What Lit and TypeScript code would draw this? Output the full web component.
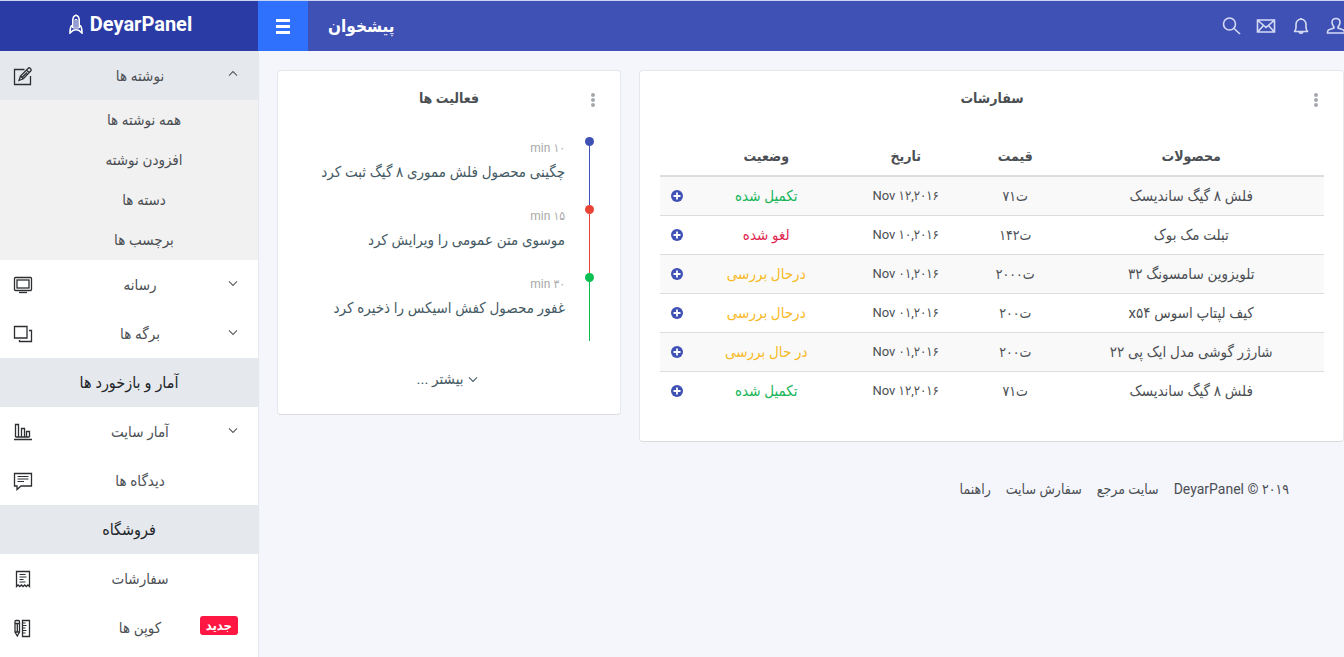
import { LitElement, html, css, svg, nothing } from "lit";
import { customElement, state } from "lit/decorators.js";
import { classMap } from "lit/directives/class-map.js";

const icons = {
  edit: svg`<path d="M11.500 3.500h-10v15h16V10"/><path d="M6 14.500l1.500-4.500 7.800-7.800q.8-.8 1.700 0l.9.900q.8.900 0 1.700L10.300 12.800z M13.500 4l2.800 2.800M9.200 11.300l4.800-4.800M7.500 10l2.800 2.800"/>`,
  screen: svg`<rect x="1.500" y="2.500" width="17" height="13" rx="1"/><rect x="4" y="5" width="12" height="8"/><path d="M6 17.500h8"/>`,
  pages: svg`<path d="M1.500 2.500h12.500v11.500H1.500z M16 6.500h2.500v11H6.500V16"/>`,
  chart: svg`<path d="M1 17.500h18M2.500 15V2.500h3V15M8.500 15V6.500h3V15M13.500 15V9.500h3V15M2.500 15h14"/>`,
  comment: svg`<path d="M1.500 2.500h17v12.500H8L4 18.500V15H1.500z"/><path stroke-width="1" d="M4.500 5.500h11M4.500 8h11M4.500 10.500h6.500"/>`,
  receipt: svg`<path d="M3.500 17.500v-15h13v15l-1.600-1.500-1.600 1.500-1.600-1.500-1.700 1.500-1.600-1.500-1.600 1.500-1.700-1.500z"/><path stroke-width="1" d="M6.500 5.500h6M6.500 8h7M6.500 10.500h4M6.500 13h6"/>`,
  tools: svg`<path d="M9.500 2.500h7v16h-7z"/><path stroke-width="1" d="M9.500 5h3M9.500 7.500h4M9.500 10h3M9.500 12.500h4M9.500 15h3"/><path d="M2 5V3.500q0-1 1-1h2.500q1 0 1 1V14l-2.200 4L2 14z M2 5.500h4.500M4.300 6v8M2 14h4.500"/>`,
  rocket: svg`<path d="M6.800 14V6q.2-4 3.200-4.800 3 .8 3.200 4.800v8M6.800 10.500Q4 12 4 19l3-2.500q3-1.500 6 0l3 2.500q0-7-2.800-8.500"/><path stroke-width="1" d="M9 13.500V5.500h2v8M6.800 14h6.400"/>`,
  search: svg`<circle cx="8.500" cy="8" r="6"/><path d="M13 12.500l6 5.500"/>`,
  mail: svg`<path d="M1.500 4h17v12h-17z M2 4.500l8 7 8-7M2 15.500l5.500-6M18 15.500l-5.500-6"/>`,
  bell: svg`<path d="M3 15.500q2-1 2-4V8.500Q5 4 10 3q5 1 5 5.500v3q0 3 2 4z M8 16q2 2.500 4 0M10 3V2"/>`,
  user: svg`<path d="M10 2.500q4 0 4 4 0 2-2 4.500v1q5 1.500 6 2.500.500 1 .500 2.500h-17q0-1.500.500-2.500 1-1 6-2.500v-1Q6 8.500 6 6.500q0-4 4-4z"/>`,
  up: svg`<path d="M5 12l5-5 5 5"/>`,
  down: svg`<path d="M5 8l5 5 5-5"/>`,
};
type IconName = keyof typeof icons;

const icon = (name: IconName, extra = "") => html`<svg
  class="icon ${extra}" viewBox="0 0 20 20" aria-hidden="true">${icons[name]}</svg>`;

interface NavRow {
  text: string;
  icon?: IconName;
  heading?: boolean;
  menu?: boolean;
  badge?: string;
}

const NAV: NavRow[] = [
  { text: "رسانه", icon: "screen", menu: true },
  { text: "برگه ها", icon: "pages", menu: true },
  { text: "آمار و بازخورد ها", heading: true },
  { text: "آمار سایت", icon: "chart", menu: true },
  { text: "دیدگاه ها", icon: "comment" },
  { text: "فروشگاه", heading: true },
  { text: "سفارشات", icon: "receipt" },
  { text: "کوپن ها", icon: "tools", badge: "جدید" },
];
const POSTS = ["همه نوشته ها", "افزودن نوشته", "دسته ها", "برچسب ها"];

const ACTIVITY = [
  { time: "min ۱۰", text: "چگینی محصول فلش مموری ۸ گیگ ثبت کرد", tone: "blue" },
  { time: "min ۱۵", text: "موسوی متن عمومی را ویرایش کرد", tone: "red" },
  { time: "min ۳۰", text: "غفور محصول کفش اسیکس را ذخیره کرد", tone: "green" },
];

const ORDERS = [
  ["فلش ۸ گیگ ساندیسک", "ت۷۱", "Nov ۱۲,۲۰۱۶", "تکمیل شده", "done"],
  ["تبلت مک بوک", "ت۱۴۲", "Nov ۱۰,۲۰۱۶", "لغو شده", "cancelled"],
  ["تلویزوین سامسونگ ۳۲", "ت۲۰۰۰", "Nov ۰۱,۲۰۱۶", "درحال بررسی", "pending"],
  ["کیف لپتاپ اسوس x۵۴", "ت۲۰۰", "Nov ۰۱,۲۰۱۶", "درحال بررسی", "pending"],
  ["شارژر گوشی مدل ایک پی ۲۲", "ت۲۰۰", "Nov ۰۱,۲۰۱۶", "در حال بررسی", "pending"],
  ["فلش ۸ گیگ ساندیسک", "ت۷۱", "Nov ۱۲,۲۰۱۶", "تکمیل شده", "done"],
];

@customElement("app-root")
export class AppRoot extends LitElement {
  @state() private postsOpen = true;

  static styles = css`
    :host {
      display: grid;
      grid-template-rows: auto 1fr;
      height: 100vh;
      overflow: hidden;
      background: #f5f6fb;
      color: #4b4f54;
      font: 14px/20px Roboto, "DejaVu Sans Condensed", "DejaVu Sans", sans-serif;
    }
    * { box-sizing: border-box; }
    button {
      font: inherit;
      color: inherit;
      background: none;
      border: 0;
      padding: 0;
      cursor: pointer;
    }
    a { color: inherit; text-decoration: none; }
    h1, h2, ul, ol { margin: 0; padding: 0; font: inherit; list-style: none; }
    .icon {
      display: block;
      flex: none;
      width: 20px;
      height: 20px;
      fill: none;
      stroke: currentColor;
      stroke-width: 1.3;
    }
    .icon.small { width: 16px; height: 16px; }
    .icon.bold { stroke-width: 1.6; }

    .top {
      display: flex;
      height: 51px;
      border-top: 1px solid #c9d3f2;
      background: #3f51b5;
      color: #fff;
    }
    .brand {
      display: flex;
      flex: none;
      width: 258px;
      justify-content: center;
      align-items: center;
      gap: 4px;
      padding-bottom: 4px;
      background: #2a3ba5;
      font-size: 20px;
      font-weight: 700;
    }
    .toggle {
      display: flex;
      flex-direction: column;
      justify-content: center;
      align-items: center;
      gap: 3px;
      width: 50px;
      background: #2f70fd;
    }
    .toggle i { width: 14px; height: 3px; background: #fff; }
    .page-title { align-self: center; padding: 0 20px; font-size: 17px; font-weight: 700; }
    .tools {
      display: flex;
      align-items: center;
      gap: 15px;
      margin-left: auto;
      margin-right: -2px;
      color: #d6dbf5;
    }

    .body { display: grid; grid-template-columns: 259px minmax(0, 1fr); min-height: 0; }
    .side {
      background: #fff;
      border-right: 1px solid #e4e7ec;
      overflow: hidden;
      font-size: 15px;
    }
    .row {
      display: grid;
      grid-template-columns: 46px 1fr 46px;
      align-items: center;
      justify-items: center;
      width: 100%;
      height: 49px;
    }
    .row.open { background: #e5e8ec; }
    .row .icon { color: #2c2e31; }
    .row .label { margin-left: 22px; }
    .row .end { justify-self: end; padding: 0 17px 4px 0; }
    .row .end .icon { color: #55595e; }
    .badge {
      justify-self: end;
      margin: 0 20px 4px 0;
      padding: 0 6px;
      border-radius: 3px;
      background: #ff1744;
      color: #fff;
      font-size: 13px;
      line-height: 19px;
      font-weight: 700;
      white-space: nowrap;
    }
    .heading {
      height: 49px;
      background: #e5e8ec;
      color: #212529;
      font-size: 16px;
      line-height: 49px;
      text-align: center;
    }
    .sub { background: #f1f1f1; }
    .sub a { display: block; padding-left: 30px; line-height: 40px; text-align: center; }

    .main { padding: 19px 0 0 18px; overflow: hidden; }
    .cards {
      display: grid;
      grid-template-columns: minmax(0, 344fr) minmax(0, 705fr);
      align-items: start;
      gap: 18px;
    }
    .card {
      padding: 17px 19px 25px;
      border: 1px solid #e3e6ea;
      border-bottom-color: #d9dcdf;
      border-radius: 4px;
      background: #fff;
    }
    .card-head {
      display: grid;
      grid-template-columns: 16px 1fr 16px;
      margin-bottom: 29px;
    }
    .card-head h2 { grid-column: 2; font-size: 14px; font-weight: 700; text-align: center; }
    .dots {
      display: flex;
      flex-direction: column;
      align-items: center;
      justify-content: center;
      gap: 1px;
      padding-top: 3px;
    }
    .dots i { width: 4px; height: 4px; border-radius: 50%; background: #a4a8ad; }

    .timeline { padding-right: 7px; }
    .event { display: flex; justify-content: flex-end; gap: 20px; height: 68px; }
    .event .info { padding-top: 1px; text-align: right; white-space: nowrap; }
    .event time { display: block; color: #a9a9a9; font-size: 12px; }
    .event p { margin: 4px 0 0; color: #455a64; font-size: 15px; }
    .marker { display: flex; flex-direction: column; align-items: center; width: 9px; }
    .marker::before { content: ""; width: 9px; height: 9px; border-radius: 50%; background: currentColor; }
    .marker::after { content: ""; flex: 1; width: 1px; background: currentColor; }
    .blue { color: #3f51b5; }
    .red { color: #e84335; }
    .green { color: #08bf51; }
    .more {
      display: flex;
      align-items: center;
      gap: 2px;
      margin: 28px auto 0;
      color: #455a64;
      font-size: 15px;
    }

    table { width: 100%; table-layout: fixed; border-collapse: collapse; text-align: center; }
    th { height: 39px; padding: 0; border-bottom: 2px solid #dcdddf; font-weight: 700; }
    td { height: 39px; padding: 0; border-top: 1px solid #dcdddf; white-space: nowrap; }
    tbody tr:nth-child(odd) { background: #f9f9f9; }
    .w-product { width: 40%; }
    .w-price { width: 13%; }
    .w-date { width: 20%; }
    .w-status { width: 22%; }
    .w-add { width: 5%; }
    .product { font-size: 15px; }
    .date { font-size: 13px; }
    .status { font-size: 15px; }
    .done { color: #17b558; }
    .cancelled { color: #e0264f; }
    .pending { color: #f7b924; }
    .add { display: block; margin: 0 auto; width: 12px; height: 12px; }
    .add svg { display: block; width: 12px; height: 12px; }
    .orders { padding: 17px 19px 31px 20px; }

    .foot {
      display: flex;
      justify-content: flex-end;
      gap: 15px;
      padding: 37px 55px 20px 0;
    }
  `;

  private renderRow(row: NavRow) {
    if (row.heading) return html`<h2 class="heading">${row.text}</h2>`;
    const inner = html`
      ${icon(row.icon!)}
      <span class="label">${row.text}</span>
      ${row.menu ? html`<span class="end">${icon("down", "small")}</span>` : nothing}
      ${row.badge ? html`<span class="badge">${row.badge}</span>` : nothing}`;
    return row.menu
      ? html`<button class="row" aria-expanded="false">${inner}</button>`
      : html`<a class="row" href="#">${inner}</a>`;
  }

  private renderCardHead(title: string) {
    return html`<div class="card-head">
      <h2 dir="rtl">${title}</h2>
      <button class="dots" aria-label=${title}><i></i><i></i><i></i></button>
    </div>`;
  }

  render() {
    return html`
      <header class="top">
        <a class="brand" href="#">${icon("rocket", "bold")}DeyarPanel</a>
        <button class="toggle" aria-label="منو"><i></i><i></i><i></i></button>
        <h1 class="page-title">پیشخوان</h1>
        <div class="tools">
          <button aria-label="جستجو">${icon("search", "bold")}</button>
          <button aria-label="پیام ها">${icon("mail", "bold")}</button>
          <button aria-label="اعلان ها">${icon("bell", "bold")}</button>
          <button aria-label="کاربر">${icon("user", "bold")}</button>
        </div>
      </header>
      <div class="body">
        <nav class="side">
          <button
            class=${classMap({ row: true, open: this.postsOpen })}
            aria-expanded=${this.postsOpen}
            @click=${() => (this.postsOpen = !this.postsOpen)}
          >
            ${icon("edit")}
            <span class="label">نوشته ها</span>
            <span class="end">${icon(this.postsOpen ? "up" : "down", "small")}</span>
          </button>
          ${this.postsOpen
            ? html`<div class="sub">${POSTS.map((p) => html`<a href="#">${p}</a>`)}</div>`
            : nothing}
          ${NAV.map((row) => this.renderRow(row))}
        </nav>
        <main class="main">
          <div class="cards">
            <section class="card">
              ${this.renderCardHead("فعالیت ها")}
              <ol class="timeline">
                ${ACTIVITY.map(
                  (a) => html`<li class="event">
                    <div class="info"><time>${a.time}</time><p dir="rtl">${a.text}</p></div>
                    <span class="marker ${a.tone}"></span>
                  </li>`
                )}
              </ol>
              <button class="more" dir="rtl">${icon("down", "small")}بیشتر ...</button>
            </section>
            <section class="card orders">
              ${this.renderCardHead("سفارشات")}
              <table dir="rtl">
                <colgroup>
                  <col class="w-product" /><col class="w-price" /><col class="w-date" />
                  <col class="w-status" /><col class="w-add" />
                </colgroup>
                <thead>
                  <tr><th>محصولات</th><th>قیمت</th><th>تاریخ</th><th>وضعیت</th><th></th></tr>
                </thead>
                <tbody>
                  ${ORDERS.map(
                    ([product, price, date, status, tone]) => html`<tr>
                      <td class="product">${product}</td>
                      <td>${price}</td>
                      <td class="date" dir="ltr">${date}</td>
                      <td class="status ${tone}">${status}</td>
                      <td>
                        <button class="add" aria-label="جزئیات">
                          <svg viewBox="0 0 12 12" aria-hidden="true">
                            <circle cx="6" cy="6" r="6" fill="#3f51b5" />
                            <path d="M6 2.500v7M2.500 6h7" stroke="#fff" stroke-width="1.800" />
                          </svg>
                        </button>
                      </td>
                    </tr>`
                  )}
                </tbody>
              </table>
            </section>
          </div>
          <footer class="foot">
            <a href="#">راهنما</a>
            <a href="#">سفارش سایت</a>
            <a href="#">سایت مرجع</a>
            <span>DeyarPanel © ۲۰۱۹</span>
          </footer>
        </main>
      </div>
    `;
  }
}
